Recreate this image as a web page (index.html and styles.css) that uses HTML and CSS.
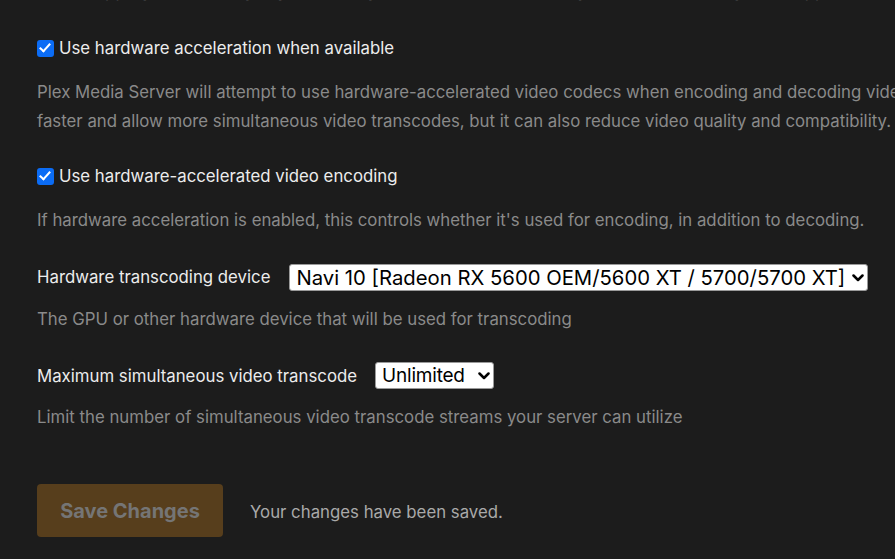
FILE: index.html
```html
<!DOCTYPE html>
<html>
<head>
<meta charset="utf-8">
<link rel="stylesheet" href="styles.css">
</head>
<body>
<div class="page">
  <p class="desc top-cut">Tone mapping converts high dynamic range content to standard range when transcoding, and supported hardware is used when it is available for it.</p>

  <div class="setting first">
    <label class="row check-row">
      <input type="checkbox" class="check" checked>
      <span class="label">Use hardware acceleration when available</span>
    </label>
    <p class="desc">Plex Media Server will attempt to use hardware-accelerated video codecs when encoding and decoding video. Hardware acceleration can make transcoding<br>faster and allow more simultaneous video transcodes, but it can also reduce video quality and compatibility.</p>
  </div>

  <div class="setting">
    <label class="row check-row">
      <input type="checkbox" class="check" checked>
      <span class="label">Use hardware-accelerated video encoding</span>
    </label>
    <p class="desc">If hardware acceleration is enabled, this controls whether it's used for encoding, in addition to decoding.</p>
  </div>

  <div class="setting select-setting">
    <div class="row">
      <span class="label">Hardware transcoding device</span>
      <span class="select-wrap select-device">
        <select class="select">
          <option>Navi 10 [Radeon RX 5600 OEM/5600 XT / 5700/5700 XT]</option>
        </select>
        <svg class="chev" width="12" height="8" viewBox="0 0 12 8"><path d="M1.5 1.5 L6 6 L10.5 1.5" fill="none" stroke="#000" stroke-width="2.5" stroke-linecap="round" stroke-linejoin="round"/></svg>
      </span>
    </div>
    <p class="desc">The GPU or other hardware device that will be used for transcoding</p>
  </div>

  <div class="setting select-setting last">
    <div class="row">
      <span class="label">Maximum simultaneous video transcode</span>
      <span class="select-wrap select-max">
        <select class="select">
          <option>Unlimited</option>
        </select>
        <svg class="chev" width="12" height="8" viewBox="0 0 12 8"><path d="M1.5 1.5 L6 6 L10.5 1.5" fill="none" stroke="#000" stroke-width="2.5" stroke-linecap="round" stroke-linejoin="round"/></svg>
      </span>
    </div>
    <p class="desc">Limit the number of simultaneous video transcode streams your server can utilize</p>
  </div>

  <div class="actions">
    <button class="save" disabled>Save Changes</button>
    <span class="saved">Your changes have been saved.</span>
  </div>
</div>
</body>
</html>
```

FILE: styles.css
```css
html, body {
  margin: 0;
  padding: 0;
  background: #1c1c1c;
  overflow: hidden;
}
body {
  font-family: Inter, "Helvetica Neue", Arial, sans-serif;
  font-size: 16.8px;
  color: #ececec;
}
.page {
  padding-left: 37px;
  width: 1400px;
}
.row {
  display: flex;
  align-items: center;
  height: 29px;
}
.check-row {
  gap: 5px;
}
.check {
  appearance: none;
  -webkit-appearance: none;
  margin: 0;
  width: 17px;
  height: 17px;
  border-radius: 3px;
  background: #0b6cf5;
  position: relative;
  flex: none;
}
.check::after {
  content: "";
  position: absolute;
  left: 5px;
  top: 1.5px;
  width: 4px;
  height: 9px;
  border: solid #fff;
  border-width: 0 2.5px 2.5px 0;
  transform: rotate(42deg);
}
.label {
  color: #ececec;
  white-space: nowrap;
}
.desc {
  margin: 15px 0 0 0;
  line-height: 29px;
  color: #8a8a8a;
  white-space: nowrap;
}
.desc.top-cut {
  margin: -23px 0 0 0;
}
.setting {
  margin-top: 26px;
}
.setting.first {
  margin-top: 27.5px;
}
.setting.select-setting {
  margin-top: 28px;
}
.setting.select-setting.last {
  margin-top: 27.5px;
}
.select-setting .desc {
  margin-top: 13px;
}
.select-wrap {
  position: relative;
  display: inline-flex;
  margin-left: 19px;
}
.select {
  appearance: none;
  -webkit-appearance: none;
  height: 27px;
  background: #fff;
  color: #000;
  border: 1px solid #9a9a9a;
  border-radius: 3px;
  font-family: Inter, "Helvetica Neue", Arial, sans-serif;
  font-size: 20.3px;
  padding: 0 22px 0 6px;
  line-height: 25px;
}
.select-device .select {
  width: 579px;
}
.select-max {
  margin-left: 18px;
}
.select-max .select {
  width: 119px;
  font-size: 19px;
  padding: 0 16px 0 6px;
  letter-spacing: -0.2px;
}
.chev {
  position: absolute;
  right: 4px;
  top: 10px;
  pointer-events: none;
}
.actions {
  margin-top: 52px;
  display: flex;
  align-items: center;
  gap: 27px;
}
.save {
  width: 186px;
  height: 53px;
  border: 0;
  border-radius: 4px;
  background: #573e1c;
  color: #757575;
  font-family: Inter, "Helvetica Neue", Arial, sans-serif;
  font-weight: 700;
  font-size: 20px;
  padding: 0;
}
.saved {
  color: #a9a9a9;
  padding-top: 3px;
}
```
